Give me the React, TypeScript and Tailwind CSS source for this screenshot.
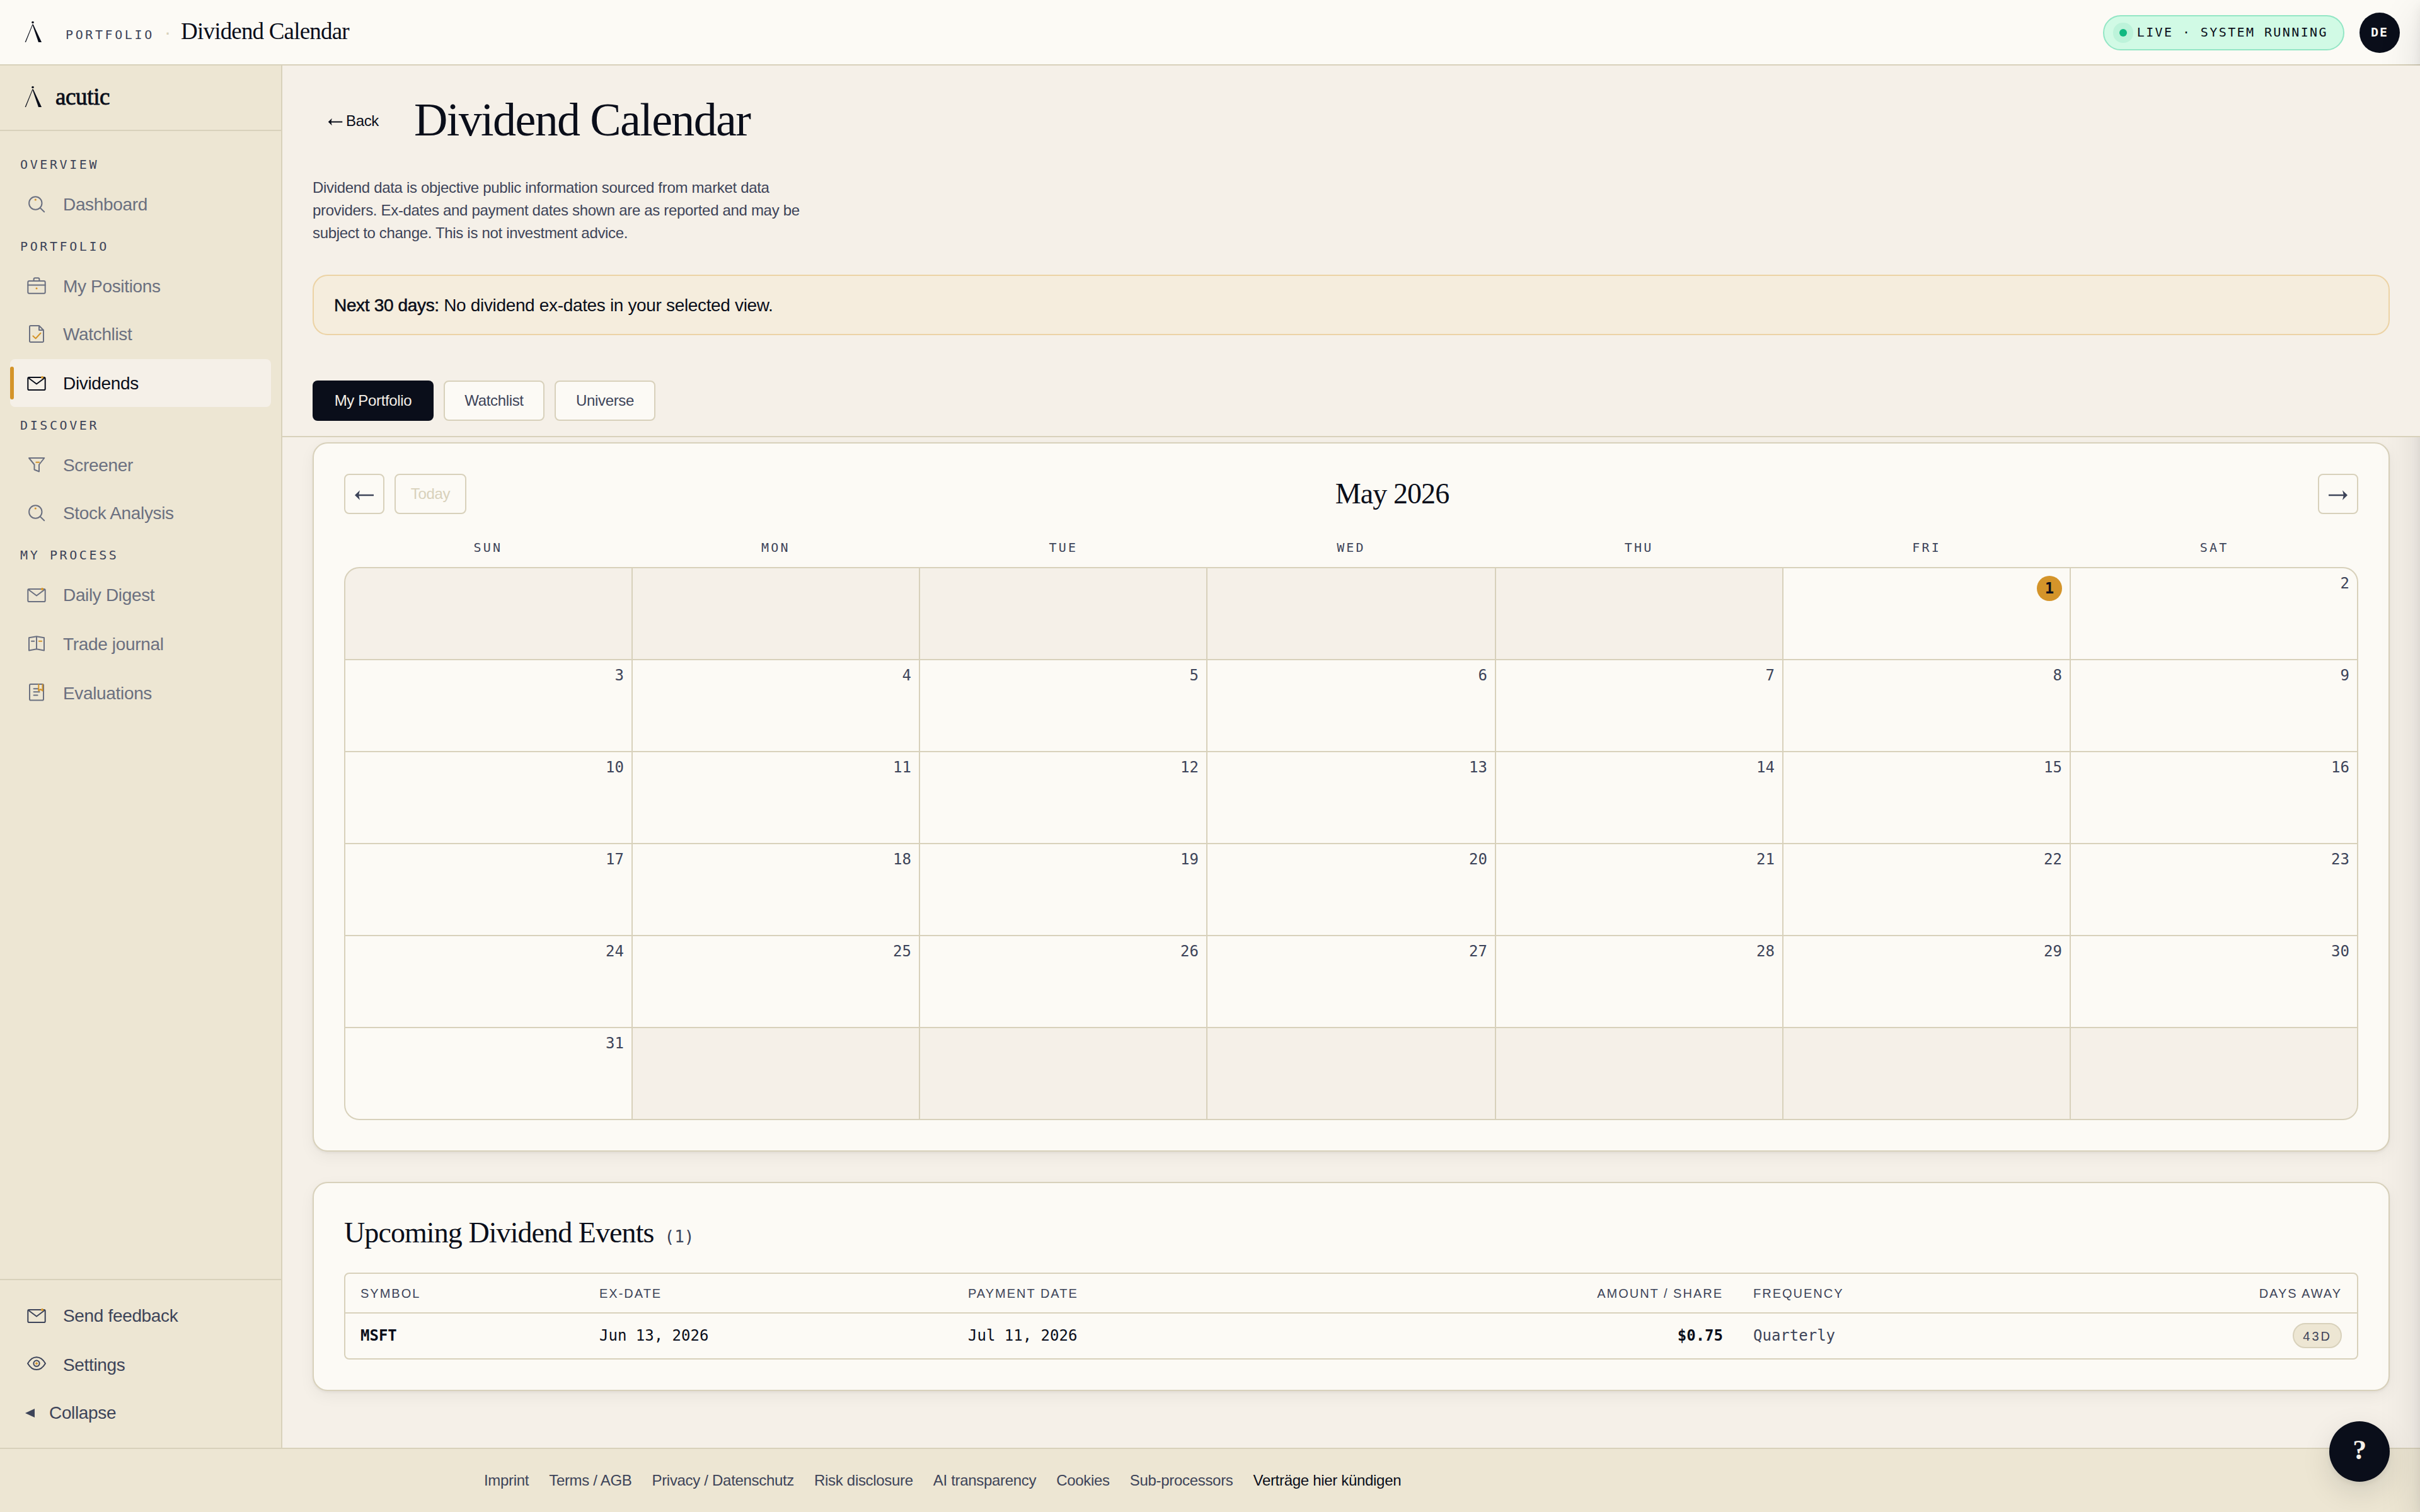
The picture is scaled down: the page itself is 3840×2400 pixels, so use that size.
/**
 * Dividend Calendar - month grid and upcoming dividend events for the portfolio
 */

import React from 'react';
import { clsx } from 'clsx';

const AMBER = '#d4942a';

type IconProps = { children: React.ReactNode };

const NavIcon: React.FC<IconProps> = ({ children }) => (
  <svg
    viewBox="0 0 36 36"
    className="h-9 w-9 shrink-0"
    fill="none"
    stroke="currentColor"
    strokeWidth="2"
    strokeLinejoin="round"
    strokeLinecap="round"
  >
    {children}
  </svg>
);

const SearchIcon = () => (
  <NavIcon>
    <circle cx="16.3" cy="16.5" r="10.2" />
    <path d="M24 24.2 30.2 30.2" />
    <circle cx="16.3" cy="11" r="1.6" fill={AMBER} stroke="none" />
  </NavIcon>
);

const BriefcaseIcon = () => (
  <NavIcon>
    <rect x="4.3" y="10" width="27.4" height="19.8" rx="2" />
    <path d="M13.6 10V7.2a2 2 0 0 1 2-2h4.8a2 2 0 0 1 2 2V10M4.3 16.5h27.4" />
    <circle cx="18" cy="21.8" r="1.5" fill={AMBER} stroke="none" />
  </NavIcon>
);

const ChecklistIcon = () => (
  <NavIcon>
    <path d="M8.5 5H22l7 7v17.5a1.5 1.5 0 0 1-1.5 1.5h-19A1.5 1.5 0 0 1 7 29.5V6.5A1.5 1.5 0 0 1 8.5 5ZM22 5v7h7" />
    <path d="M12.3 21.3 16.6 25.2 24.5 16.8" stroke={AMBER} />
  </NavIcon>
);

const MailIcon = () => (
  <NavIcon>
    <rect x="4.3" y="9" width="27.4" height="20" rx="1.8" />
    <path d="M5 9.8 18 19.5 31 9.8" />
    <circle cx="27" cy="9" r="2.1" fill={AMBER} stroke="none" />
  </NavIcon>
);

const FunnelIcon = () => (
  <NavIcon>
    <path d="M6 7h24.3L22 17.5V28.5L14.5 25.5V17.5Z" />
    <path d="M17.3 13.7h4.8" stroke={AMBER} />
  </NavIcon>
);

const JournalIcon = () => (
  <NavIcon>
    <path d="M6 8.3 18 6.3 30 8.3V28.5L18 26.2 6 28.5ZM18 6.3V26.2M10 13.7h4.2" />
    <path d="M21.8 13.7h4.4" stroke={AMBER} />
  </NavIcon>
);

const EvaluationIcon = () => (
  <NavIcon>
    <rect x="7" y="4" width="22" height="25.5" rx="1.8" />
    <path d="M13.6 11.2h7.5M13.6 16.2h9M13.6 21.4h6" />
    <path d="M21.3 4.5V14.5L24.5 12 27.5 14.5V4.5" stroke={AMBER} />
  </NavIcon>
);

const EyeIcon = () => (
  <NavIcon>
    <path d="M4 16.2C8 9.5 12.6 6.3 18 6.3s10 3.2 14 9.9c-4 6.7-8.6 9.9-14 9.9S8 22.9 4 16.2Z" />
    <circle cx="18" cy="16.2" r="4.6" />
    <circle cx="18" cy="16.2" r="1.9" fill={AMBER} stroke="none" />
  </NavIcon>
);

const ArrowIcon: React.FC<{ className?: string }> = ({ className }) => (
  <svg viewBox="0 0 32 20" className={className} fill="currentColor">
    <path d="M1 10 9 2.2 7.4 8.8H31v2.4H7.4L9 17.8Z" />
  </svg>
);

const Logo = () => (
  <svg viewBox="0 0 40 40" className="h-10 w-10 shrink-0" fill="#0a0e1a">
    <circle cx="20" cy="3.5" r="1.8" />
    <path d="M20.3 6.8 9 35H7.6L19.3 6.8Z" />
    <path d="M19.3 6.8h1.5L34 35h-5Z" />
  </svg>
);

type NavItem = {
  label: string;
  icon: React.FC;
  active?: boolean;
  spacing?: string;
};

const navGroups: { title: string; items: NavItem[] }[] = [
  { title: 'OVERVIEW', items: [{ label: 'Dashboard', icon: SearchIcon }] },
  {
    title: 'PORTFOLIO',
    items: [
      { label: 'My Positions', icon: BriefcaseIcon },
      { label: 'Watchlist', icon: ChecklistIcon },
      { label: 'Dividends', icon: MailIcon, active: true, spacing: 'mt-0.5' },
    ],
  },
  {
    title: 'DISCOVER',
    items: [
      { label: 'Screener', icon: FunnelIcon },
      { label: 'Stock Analysis', icon: SearchIcon },
    ],
  },
  {
    title: 'MY PROCESS',
    items: [
      { label: 'Daily Digest', icon: MailIcon },
      { label: 'Trade journal', icon: JournalIcon, spacing: 'mt-0.5' },
      { label: 'Evaluations', icon: EvaluationIcon, spacing: 'mt-0.5' },
    ],
  },
];

const weekdays = ['SUN', 'MON', 'TUE', 'WED', 'THU', 'FRI', 'SAT'];

// May 2026 starts on a Friday
const LEADING_BLANKS = 5;
const DAYS_IN_MONTH = 31;
const TODAY = 1;

const cells = Array.from({ length: 42 }, (_, i) => {
  const day = i - LEADING_BLANKS + 1;
  return day >= 1 && day <= DAYS_IN_MONTH ? day : null;
});

const footerLinks = [
  'Imprint',
  'Terms / AGB',
  'Privacy / Datenschutz',
  'Risk disclosure',
  'AI transparency',
  'Cookies',
  'Sub-processors',
];

const NavLink: React.FC<{ item: NavItem }> = ({ item }) => {
  const Icon = item.icon;
  return (
    <a
      className={clsx(
        'relative flex h-[76px] items-center gap-6 rounded-lg pl-6 text-[28px]',
        item.active ? 'bg-[#f5f0e8] text-[#0a0e1a]' : 'text-[#6b7080]',
        item.spacing
      )}
    >
      {item.active && <span className="absolute left-0 top-3 h-[52px] w-1.5 rounded-[3px] bg-[#d4942a]" />}
      <Icon />
      <span className="pt-0.5">{item.label}</span>
    </a>
  );
};

const Header = () => (
  <header className="flex h-[104px] shrink-0 items-center justify-between border-b-2 border-[#d8d1bb] bg-[#fcfaf5] pl-8 pr-8 pt-0.5">
    <div className="flex items-center gap-8">
      <Logo />
      <div className="flex items-baseline gap-4 pb-0.5">
        <span className="font-['DejaVu_Sans_Mono',monospace] text-[20px] tracking-[0.18em] text-[#3d4459]">PORTFOLIO</span>
        <span className="text-[32px] leading-9 text-[#d8d1bb]">·</span>
        <span className="font-['Liberation_Serif',serif] text-[37px] leading-9 tracking-[-0.022em]">Dividend Calendar</span>
      </div>
    </div>
    <div className="flex items-center gap-6">
      <div className="flex h-14 items-center gap-4 rounded-full border-2 border-[#93e6c5] bg-[#d1fae5] px-6">
        <span className="h-3 w-3 rounded-full bg-[#10b981] shadow-[0_0_0_10px_rgba(16,185,129,0.1)]" />
        <span className="pb-0.5 font-['DejaVu_Sans_Mono',monospace] text-[20px] leading-6 tracking-[0.12em]">
          LIVE · SYSTEM RUNNING
        </span>
      </div>
      <div className="flex h-16 w-16 items-center justify-center rounded-full bg-[#0a0e1a] pb-0.5 font-['DejaVu_Sans_Mono',monospace] text-[20px] font-bold leading-6 tracking-[0.1em] text-[#fcfaf5]">
        DE
      </div>
    </div>
  </header>
);

const Sidebar = () => (
  <aside className="flex w-[448px] shrink-0 flex-col border-r-2 border-[#d8d1bb] bg-[#ede6d3]">
    <div className="flex h-[104px] items-center gap-4 border-b-2 border-[#d8d1bb] pl-8">
      <Logo />
      <span className="pb-0.5 font-['Liberation_Serif',serif] text-[37px] leading-9 tracking-[-0.01em] [-webkit-text-stroke:0.8px_#0a0e1a]">
        acutic
      </span>
    </div>
    <nav className="flex-1 px-4 pt-6">
      {navGroups.map((group) => (
        <div key={group.title}>
          <div className="h-[54px] pl-4 pt-[17px] font-['DejaVu_Sans_Mono',monospace] text-[20px] leading-6 tracking-[0.18em] text-[#3d4459]">
            {group.title}
          </div>
          {group.items.map((item) => (
            <NavLink key={item.label} item={item} />
          ))}
        </div>
      ))}
    </nav>
    <div className="h-[268px] border-t-2 border-[#d8d1bb] px-4 pt-[18px] text-[28px] text-[#3d4459]">
      <a className="flex h-[76px] items-center gap-6 pl-6">
        <MailIcon />
        <span className="pt-0.5">Send feedback</span>
      </a>
      <a className="mt-0.5 flex h-[76px] items-center gap-6 pl-6">
        <EyeIcon />
        <span className="pt-0.5">Settings</span>
      </a>
      <a className="flex h-[76px] items-center gap-[22px] pl-6">
        <svg viewBox="0 0 16 16" className="h-4 w-4" fill="currentColor">
          <path d="M0 9 15 2v14Z" />
        </svg>
        <span className="pt-0.5">Collapse</span>
      </a>
    </div>
  </aside>
);

const CalendarCard = () => (
  <section className="mx-12 mt-2 rounded-3xl border-2 border-[#d8d1bb] bg-[#fcfaf5] p-12 shadow-[0_2px_4px_rgba(10,14,26,0.05),0_8px_24px_rgba(10,14,26,0.05)]">
    <div className="flex h-16 items-center justify-between">
      <div className="flex gap-4">
        <button className="flex h-16 w-16 items-center justify-center rounded-lg border-2 border-[#d8d1bb] pt-1 text-[#3d4459]">
          <ArrowIcon className="h-5 w-8" />
        </button>
        <button className="h-16 w-[114px] rounded-lg border-2 border-[#d8d1bb] text-[24px] text-[#d8d1bb]">Today</button>
      </div>
      <h2 className="font-['Liberation_Serif',serif] text-[46px] leading-none tracking-[-0.02em]">May 2026</h2>
      <button className="flex h-16 w-16 items-center justify-center rounded-lg border-2 border-[#d8d1bb] pt-1 text-[#3d4459]">
        <ArrowIcon className="h-5 w-8 rotate-180" />
      </button>
    </div>
    <div className="grid h-[84px] grid-cols-7 pt-[41px] text-center font-['DejaVu_Sans_Mono',monospace] text-[20px] leading-6 tracking-[0.16em] text-[#3d4459]">
      {weekdays.map((day) => (
        <span key={day}>{day}</span>
      ))}
    </div>
    <div className="grid auto-rows-[144px] grid-cols-[454px_454px_454px_456px_454px_454px_454px] gap-0.5 overflow-hidden rounded-3xl border-2 border-[#d8d1bb] bg-[#d8d1bb]">
      {cells.map((day, i) => (
        <div
          key={i}
          className={clsx(
            "flex justify-end p-3 font-['DejaVu_Sans_Mono',monospace] text-[24px] leading-6 tracking-normal text-[#3d4459]",
            day ? 'bg-[#fcfaf5]' : 'bg-[#f5f0e8]'
          )}
        >
          {day === TODAY ? (
            <span className="flex h-10 w-10 items-center justify-center rounded-full bg-[#d4942a] font-bold text-[#0a0e1a]">
              {day}
            </span>
          ) : (
            day
          )}
        </div>
      ))}
    </div>
  </section>
);

const UpcomingCard = () => (
  <section className="mx-12 mt-12 h-[332px] rounded-3xl border-2 border-[#d8d1bb] bg-[#fcfaf5] px-12 pt-[54px] shadow-[0_2px_4px_rgba(10,14,26,0.05),0_8px_24px_rgba(10,14,26,0.05)]">
    <div className="flex h-[88px] items-baseline gap-[17px]">
      <h2 className="font-['Liberation_Serif',serif] text-[46px] leading-[50px] tracking-[-0.02em]">
        Upcoming Dividend Events
      </h2>
      <span className="font-['DejaVu_Sans_Mono',monospace] text-[26px] tracking-normal text-[#3d4459]">(1)</span>
    </div>
    <div className="h-[138px] overflow-hidden rounded-lg border-2 border-[#d8d1bb]">
      <table className="w-full table-fixed border-collapse">
        <colgroup>
          <col className="w-[379px]" />
          <col className="w-[585px]" />
          <col className="w-[623px]" />
          <col className="w-[623px]" />
          <col className="w-[491px]" />
          <col className="w-[491px]" />
        </colgroup>
        <thead>
          <tr className="h-[62px] border-b-2 border-[#d8d1bb] text-left text-[20px] tracking-[0.1em] text-[#3d4459]">
            <th className="px-6 font-normal">SYMBOL</th>
            <th className="px-6 font-normal">EX-DATE</th>
            <th className="px-6 font-normal">PAYMENT DATE</th>
            <th className="px-6 text-right font-normal">AMOUNT / SHARE</th>
            <th className="px-6 font-normal">FREQUENCY</th>
            <th className="px-6 text-right font-normal">DAYS AWAY</th>
          </tr>
        </thead>
        <tbody>
          <tr className="h-[72px] font-['DejaVu_Sans_Mono',monospace] text-[24px] tracking-normal">
            <td className="px-6 pb-0.5 font-bold">MSFT</td>
            <td className="px-6 pb-0.5">Jun 13, 2026</td>
            <td className="px-6 pb-0.5">Jul 11, 2026</td>
            <td className="px-6 pb-0.5 text-right font-semibold">$0.75</td>
            <td className="px-6 pb-0.5 text-[#3d4459]">Quarterly</td>
            <td className="px-6 pb-0.5">
              <span className="ml-auto flex h-10 w-fit items-center rounded-full border-2 border-[#d8d1bb] bg-[#ede6d3] px-3.5 pt-0.5 font-['Liberation_Sans',sans-serif] text-[20px] tracking-[0.15em] text-[#3d4459]">
                43D
              </span>
            </td>
          </tr>
        </tbody>
      </table>
    </div>
  </section>
);

export default function App() {
  return (
    <div className="relative flex h-[2400px] w-[3840px] flex-col overflow-hidden bg-[#f5f0e8] font-['Liberation_Sans',Arial,sans-serif] tracking-[-0.34px] text-[#0a0e1a]">
      <Header />
      <div className="flex min-h-0 flex-1">
        <Sidebar />
        <main className="flex-1">
          {/* Title and filter bar */}
          <div className="relative z-10 border-b-2 border-[#d8d1bb] bg-[#f5f0e8] px-12 pb-6 pt-12">
            <div className="flex h-[76px] items-center">
              <a className="flex w-[161px] items-center gap-[5px] pl-6 pt-1 text-[24px]">
                <ArrowIcon className="mt-0.5 h-[15px] w-6" />
                Back
              </a>
              <h1 className="font-['Liberation_Serif',serif] text-[74px] leading-[74px] tracking-[-0.022em]">
                Dividend Calendar
              </h1>
            </div>
            <p className="mt-[52px] max-w-[800px] text-[24px] leading-9 tracking-[-0.32px] text-[#3d4459]">
              Dividend data is objective public information sourced from market data providers. Ex-dates and payment
              dates shown are as reported and may be subject to change. This is not investment advice.
            </p>
            <div className="mt-12 flex h-24 items-center rounded-3xl border-2 border-[#ecd3a5] bg-[#f5eddd] px-8 pt-0.5 text-[28px]">
              <p>
                <span className="[-webkit-text-stroke:0.5px_#0a0e1a]">Next 30 days:</span> No dividend ex-dates in your
                selected view.
              </p>
            </div>
            <div className="mt-[72px] flex gap-4 text-[24px]">
              <button className="h-16 w-48 rounded-lg bg-[#0a0e1a] text-[#f5f0e8]">My Portfolio</button>
              <button className="h-16 w-40 rounded-lg border-2 border-[#d8d1bb] bg-[#fcfaf5] text-[#3d4459]">Watchlist</button>
              <button className="h-16 w-40 rounded-lg border-2 border-[#d8d1bb] bg-[#fcfaf5] text-[#3d4459]">Universe</button>
            </div>
          </div>
          <CalendarCard />
          <UpcomingCard />
        </main>
      </div>
      <footer className="flex h-[102px] shrink-0 items-center gap-8 border-t-2 border-[#d8d1bb] bg-[#ede6d3] pl-[768px] text-[24px] tracking-[-0.31px] text-[#3d4459]">
        {footerLinks.map((link) => (
          <a key={link}>{link}</a>
        ))}
        <a className="text-[#0a0e1a]">Verträge hier kündigen</a>
      </footer>

      {/* Floating help button */}
      <button className="absolute bottom-12 right-12 h-24 w-24 rounded-full bg-[#0a0e1a] pb-1 font-['Liberation_Serif',serif] text-[44px] font-bold leading-none text-[#f5f0e8] shadow-[0_4px_8px_rgba(10,14,26,0.06),0_16px_48px_rgba(10,14,26,0.12)]">
        ?
      </button>

      {/* Closed drawer parked off the right edge, only its shadow shows */}
      <div className="absolute left-full top-0 h-full w-[800px] shadow-[0_8px_16px_rgba(10,14,26,0.06),0_24px_64px_rgba(10,14,26,0.12)]" />
    </div>
  );
}
